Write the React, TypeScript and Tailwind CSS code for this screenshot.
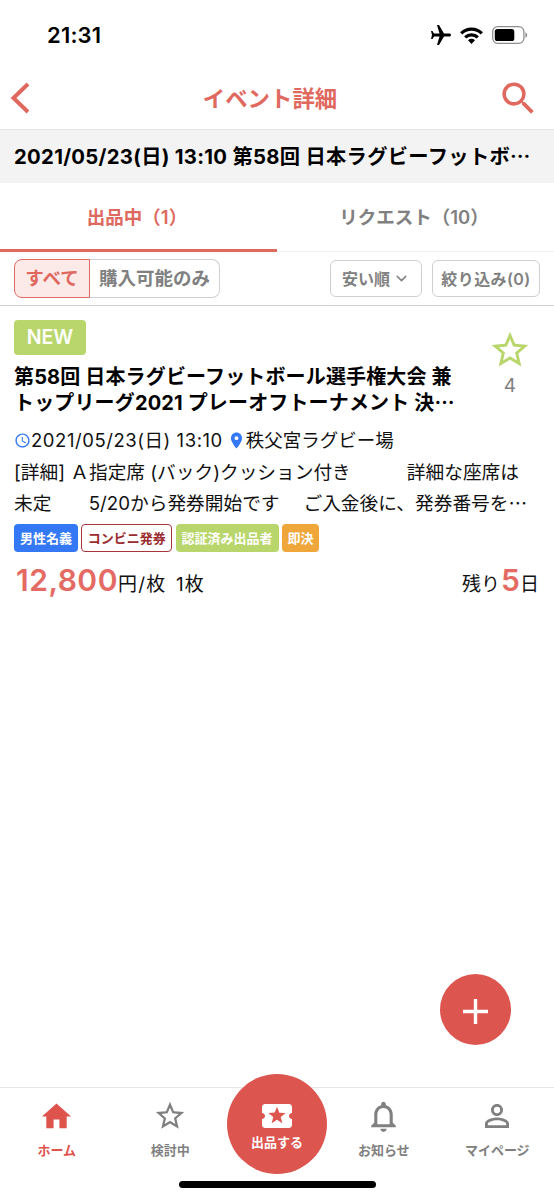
import type { FC, ReactNode } from 'react';
import {
  MdAccessTime,
  MdAirplanemodeActive,
  MdHome,
  MdLocalActivity,
  MdLocationOn,
  MdNotificationsNone,
  MdPersonOutline,
  MdSearch,
  MdStarBorder,
} from 'react-icons/md';
import { ChevronDown } from 'lucide-react';

// 省略記号は和文フォントで中央寄せにする
const Ellipsis: FC = () => <span className="font-['Noto_Sans_CJK_JP',sans-serif] leading-[0]">…</span>;

const StatusBar: FC = () => (
  <div className="flex h-[67px] items-center justify-between pt-[3px] pr-[26px] pl-[47px]">
    <span className="text-[22px] font-semibold tracking-[0.2px] text-black">21:31</span>
    <div className="flex items-center text-black">
      <MdAirplanemodeActive className="mr-[7px] size-[24px] rotate-90" />
      <svg className="mr-[9px] h-[17px] w-[23px]" viewBox="0 0 23 17" fill="none" stroke="currentColor" strokeWidth="3.3">
        <path d="M1.2 6.3a14.6 14.6 0 0 1 20.6 0" />
        <path d="M5.2 10.4a9 9 0 0 1 12.6 0" />
        <path d="M11.5 17 8 13.3a5 5 0 0 1 7 0z" fill="currentColor" stroke="none" />
      </svg>
      <svg className="h-[18px] w-[36px]" viewBox="0 0 36 18">
        <rect x="0.7" y="0.7" width="31.2" height="16.6" rx="5" fill="none" stroke="#8e8e8e" strokeWidth="1.3" />
        <rect x="2.8" y="3" width="19.5" height="12" rx="2.6" fill="#000" />
        <path d="M33.4 6.2v5.6c2.4-1 2.4-4.6 0-5.6z" fill="#8e8e8e" />
      </svg>
    </div>
  </div>
);

const Header: FC = () => (
  <header className="flex h-[63px] items-center justify-between border-b border-[#e6e6e6] pr-[14px] pl-[10px] text-[#e0695f]">
    <button className="w-[42px]">
      <svg className="h-[32px] w-[20px]" viewBox="0 0 20 32" fill="none" stroke="currentColor" strokeWidth="4">
        <path d="M18 2 3.5 16 18 30" />
      </svg>
    </button>
    <h1 className="mr-[9px] pt-[1px] text-[22.4px] font-semibold">イベント詳細</h1>
    <button>
      <MdSearch className="size-[43px]" />
    </button>
  </header>
);

interface TagProps {
  className: string;
  children: ReactNode;
}

const Tag: FC<TagProps> = ({ className, children }) => (
  <span
    className={`flex h-[28px] items-center justify-center rounded-[4px] pt-[1px] text-[13px] font-bold whitespace-nowrap ${className}`}
  >
    {children}
  </span>
);

interface NavItemProps {
  icon: ReactNode;
  label: string;
  active?: boolean;
}

const NavItem: FC<NavItemProps> = ({ icon, label, active }) => (
  <button
    className={`flex h-[80px] flex-1 flex-col items-center pt-[9px] ${active ? 'text-[#de544d]' : 'text-[#808080]'}`}
  >
    <span className="flex h-[38px] items-center">{icon}</span>
    <span className="mt-[5px] text-[13px] leading-[20px] font-semibold">{label}</span>
  </button>
);

const ListingCard: FC = () => (
  <article className="flex flex-col px-[14px] pt-[14px] text-[#111]">
    <div className="flex justify-between">
      <div className="flex flex-col items-start">
        <span className="flex h-[35px] w-[72px] items-center justify-center rounded-[4px] bg-[#b9d66d] pt-[1px] text-[19.5px] font-semibold text-white">
          NEW
        </span>
        <h2 className="mt-[10px] text-[20px] leading-[25.5px] font-bold tracking-[0.15px] whitespace-nowrap text-black">
          第58回 日本ラグビーフットボール選手権大会 兼
          <br />
          トップリーグ2021 プレーオフトーナメント 決
          <Ellipsis />
        </h2>
      </div>
      <div className="mr-[-6px] flex w-[72px] flex-col items-center pt-[8px]">
        <MdStarBorder className="size-[44px] text-[#b9d66d]" />
        <span className="pt-[1px] text-[19px] leading-[26px] text-[#808080]">4</span>
      </div>
    </div>

    <div className="mt-[9px] flex h-[31px] items-center text-[18.5px] whitespace-nowrap">
      <MdAccessTime className="size-[17px] text-[#3478f6]" />
      <span className="tracking-[0.55px]">2021/05/23(日) 13:10</span>
      <MdLocationOn className="ml-[4px] size-[19px] text-[#3478f6]" />
      <span>秩父宮ラグビー場</span>
    </div>
    <p className="pt-[1px] text-[18.7px] leading-[31px] whitespace-pre">
      {'[詳細] Ａ指定席 (バック)クッション付き　　　詳細な座席は'}
      <br />
      {'未定　　5/20から発券開始です　 ご入金後に、発券番号を'}
      <Ellipsis />
    </p>

    <div className="mt-[5px] flex gap-[3.3px]">
      <Tag className="w-[64px] bg-[#3478f6] text-white">男性名義</Tag>
      <Tag className="w-[91px] border border-[#a5373b] text-[#9b2c30]">コンビニ発券</Tag>
      <Tag className="w-[103px] bg-[#b9d66d] text-white">認証済み出品者</Tag>
      <Tag className="w-[37px] bg-[#efa63b] text-white">即決</Tag>
    </div>

    <div className="mt-[7px] flex h-[42px] items-baseline justify-between pr-[1px] text-[19px] leading-[42px] whitespace-nowrap">
      <p className="tracking-[1.2px] [word-spacing:3px]">
        <span className="ml-[2px] text-[30px] font-semibold tracking-[0.5px] text-[#e46b63]">12,800</span>円/枚 1枚
      </p>
      <p>
        残り<span className="ml-[1px] text-[30px] font-semibold text-[#e46b63]">5</span>日
      </p>
    </div>
  </article>
);

const BottomNav: FC = () => (
  <nav className="relative flex h-[113px] flex-col items-center border-t border-[#e6e6e6] bg-white">
    <div className="flex w-full">
      <NavItem active icon={<MdHome className="size-[35px]" />} label="ホーム" />
      <NavItem icon={<MdStarBorder className="size-[34px]" />} label="検討中" />
      <button className="mt-[-14px] flex size-[100px] flex-col items-center rounded-full bg-[#dd554f] pt-[24px] text-white">
        <MdLocalActivity className="size-[36px]" />
        <span className="text-[13px] leading-[16px] font-semibold">出品する</span>
      </button>
      <NavItem icon={<MdNotificationsNone className="size-[37px]" />} label="お知らせ" />
      <NavItem icon={<MdPersonOutline className="size-[36px]" />} label="マイページ" />
    </div>
    <div className="mt-[7px] h-[7px] w-[197px] rounded-full bg-black" />
  </nav>
);

export default function App() {
  return (
    <div lang="ja" className="flex h-[1200px] w-[554px] flex-col overflow-hidden bg-white font-['Inter','Noto_Sans_CJK_JP',sans-serif]">
      <StatusBar />
      <Header />

      <div className="flex h-[53px] items-center bg-[#f3f3f3] px-[14px] pt-[2px] text-[20.3px] font-bold tracking-[0.3px] whitespace-nowrap text-black">
        <span>
          2021/05/23(日) 13:10 第58回 日本ラグビーフットボ
          <Ellipsis />
        </span>
      </div>

      <div className="flex h-[69px] text-[18.5px] font-semibold">
        <button className="flex-1 border-b-[3px] border-[#e0695f] pt-[3px] pr-[3px] text-[#e0695f]">出品中（1）</button>
        <button className="flex-1 border-b border-[#f2f2f2] pt-[1px] pr-[3px] text-[#808080]">リクエスト（10）</button>
      </div>

      <div className="flex h-[54px] items-center justify-between border-b border-[#cfcfcf] px-[14px] font-semibold text-[#808080]">
        <div className="flex h-[39px] w-[206px] text-[18.5px]">
          <button className="w-[76px] rounded-l-[8px] border border-[#de6a62] bg-[#fbeae8] text-[#e0695f]">すべて</button>
          <button className="flex-1 rounded-r-[8px] border border-l-0 border-[#cfcfcf]">購入可能のみ</button>
        </div>
        <div className="flex gap-[10px] text-[16px]">
          <button className="flex h-[37px] w-[92px] items-center justify-center gap-[3px] rounded-[6px] border border-[#cfcfcf]">
            安い順
            <ChevronDown className="size-[17px]" />
          </button>
          <button className="h-[37px] w-[108px] rounded-[6px] border border-[#cfcfcf] tracking-[0.4px]">絞り込み(0)</button>
        </div>
      </div>

      <main className="flex flex-1 flex-col justify-between">
        <ListingCard />
        <button className="mr-[43px] mb-[42px] flex size-[71px] items-center justify-center self-end rounded-full bg-[#dd554f] pt-[4px] text-white">
          <svg className="size-[25px]" viewBox="0 0 25 25" stroke="currentColor" strokeWidth="3.4">
            <path d="M12.5 0v25M0 12.5h25" />
          </svg>
        </button>
      </main>

      <BottomNav />
    </div>
  );
}
